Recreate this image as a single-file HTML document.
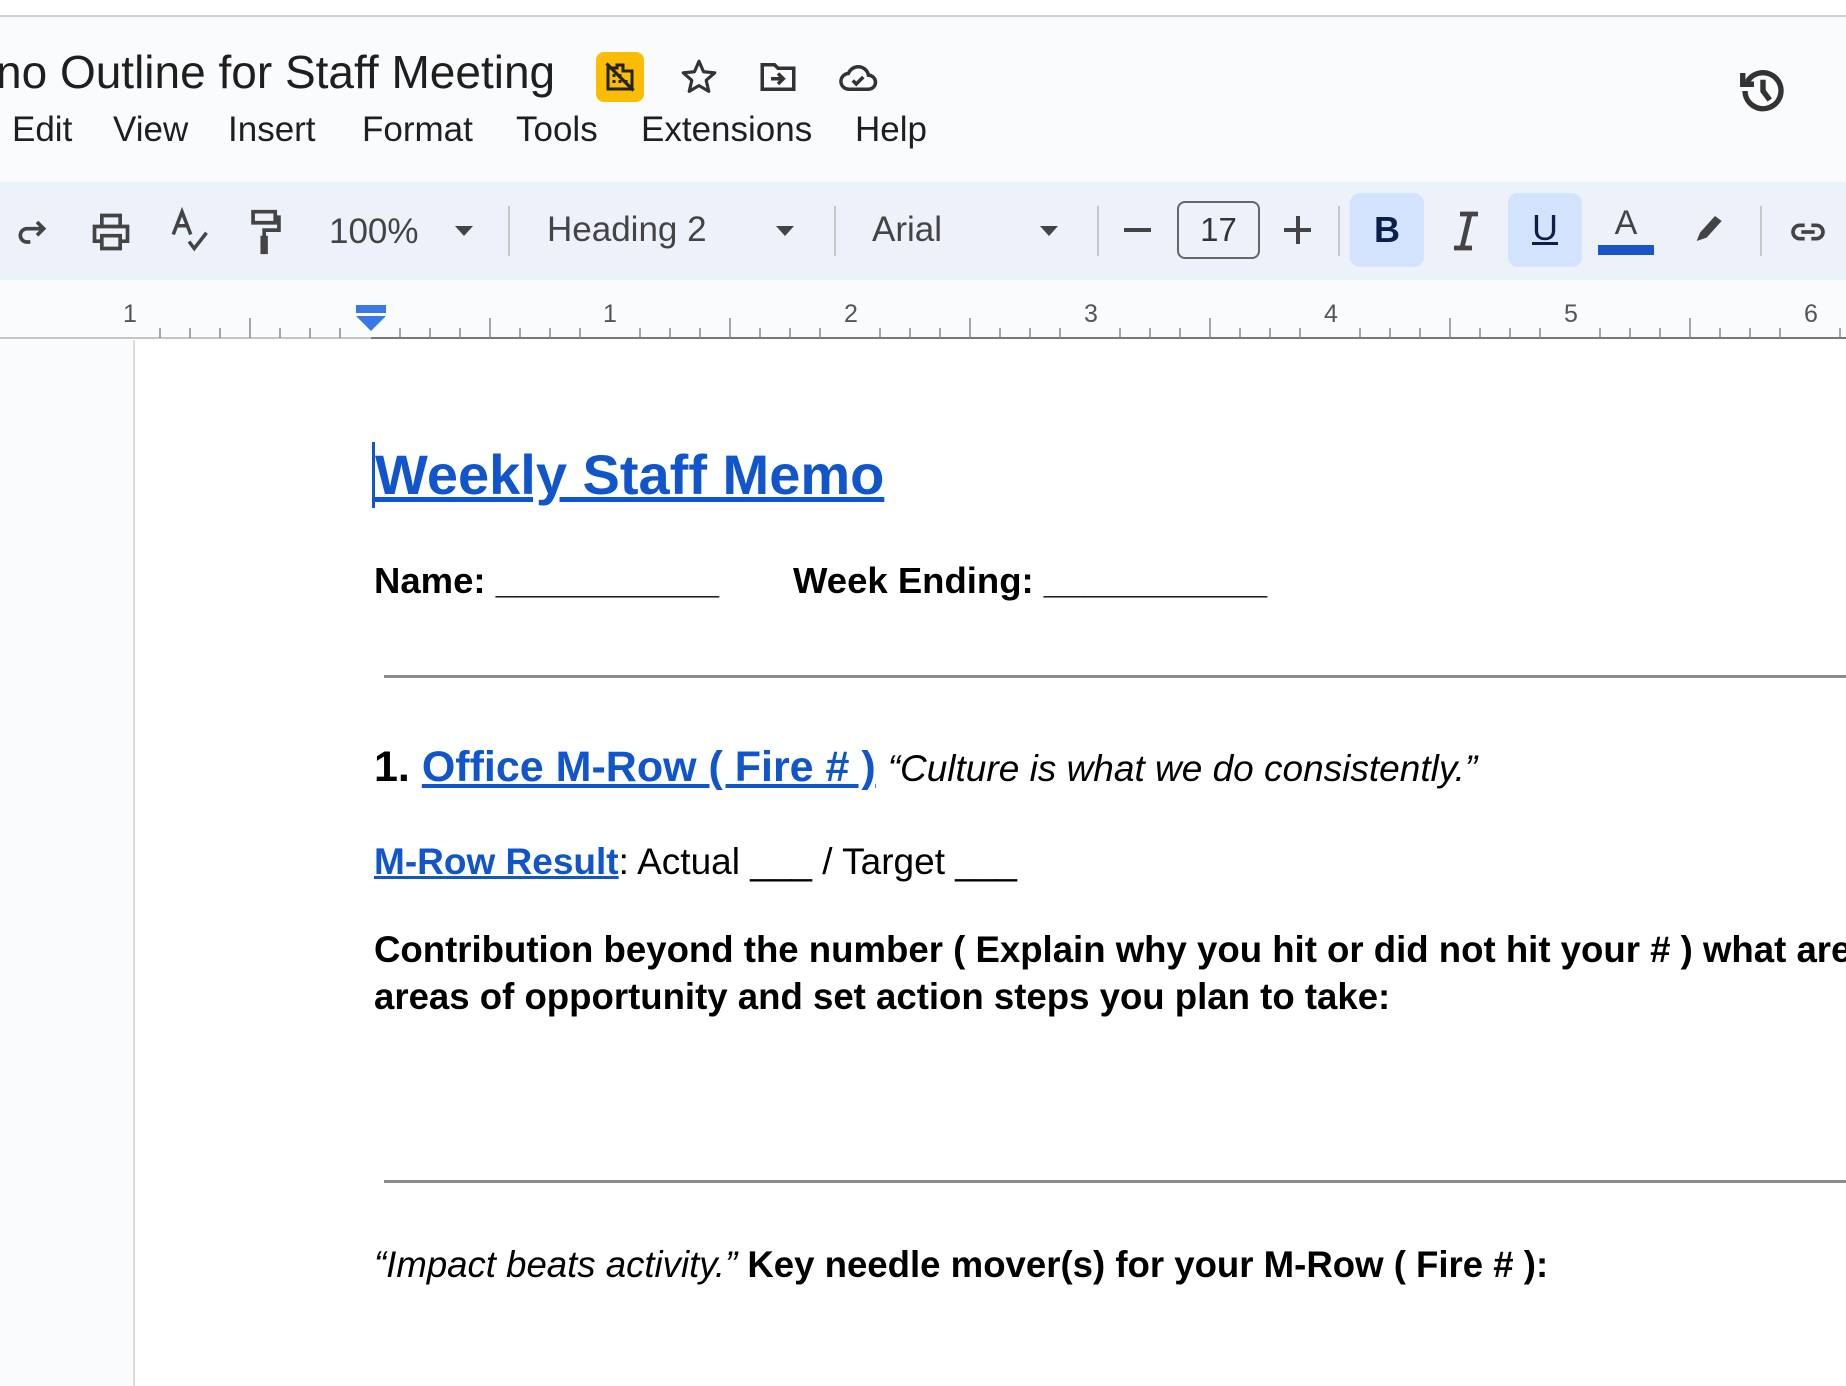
<!DOCTYPE html>
<html><head><meta charset="utf-8"><style>
*{margin:0;padding:0;box-sizing:border-box}
body{width:1846px;height:1386px;overflow:hidden;background:#f9fbfd;font-family:"Liberation Sans",Arial,sans-serif;position:relative;color:#1f1f1f}
.a{position:absolute;white-space:nowrap}
.top{position:absolute;left:0;top:0;width:1846px;height:17px;background:#fff;border-bottom:2px solid #d0d0d0}
.tb{position:absolute;left:0;top:182px;width:1846px;height:98px;background:#edf2fa}
.sep{position:absolute;top:206px;width:2px;height:50px;background:#c7c7c7}
.page{position:absolute;left:133px;top:340px;width:1713px;height:1046px;background:#fff;border-left:2px solid #dadce0}
.t{font-weight:bold;color:#000}
.blue{color:#1155cc;text-decoration:underline;font-weight:bold}
.hr{position:absolute;left:384px;width:1462px;height:3px;background:#8a8a8a}
.m{font-size:35px;top:110px}
</style></head><body>
<div class="top"></div>
<div class="a" style="left:-4px;top:45px;font-size:46px;color:#1f1f1f">no Outline for Staff Meeting</div>
<div class="a" style="left:596px;top:52px;width:48px;height:50px;background:#fbbc04;border-radius:8px"></div>
<svg class="a" style="left:602px;top:58px" width="36" height="38" viewBox="0 0 24 24"><path d="M4 20V6h6v-2h4v4h6v12z" fill="none" stroke="#222" stroke-width="2"/><path d="M7 11h2M7 15h2M11 11h2M11 15h2M15 15h2" stroke="#222" stroke-width="2"/><path d="M3 3l18 18" stroke="#222" stroke-width="2.2"/></svg>
<svg class="a" style="left:678px;top:56px" width="42" height="42" viewBox="0 0 24 24"><path d="M12 3l2.6 6 6.4.6-4.9 4.3 1.5 6.3L12 16.9 6.4 20.2l1.5-6.3L3 9.6l6.4-.6z" fill="none" stroke="#333" stroke-width="1.8" stroke-linejoin="round"/></svg>
<svg class="a" style="left:756px;top:56px" width="44" height="42" viewBox="0 0 24 24"><path d="M3 5h7l2 2h9v12H3z" fill="none" stroke="#333" stroke-width="2"/><path d="M8 13h7M12 10l3 3-3 3" fill="none" stroke="#333" stroke-width="2"/></svg>
<svg class="a" style="left:834px;top:56px" width="48" height="42" viewBox="0 0 24 24"><path d="M7 19h11a4 4 0 0 0 0-8 6 6 0 0 0-11.5-1A4.5 4.5 0 0 0 7 19z" fill="none" stroke="#333" stroke-width="2"/><path d="M9 14l2 2 4-4" fill="none" stroke="#333" stroke-width="2"/></svg>
<svg class="a" style="left:1736px;top:64px" width="54" height="54" viewBox="0 0 24 24"><path d="M5 8A8 8 0 1 1 4 12" fill="none" stroke="#333" stroke-width="2.4"/><path d="M3 4v5h5" fill="none" stroke="#333" stroke-width="2.4"/><path d="M12 7v5l3 4" fill="none" stroke="#333" stroke-width="2.4"/></svg>
<div class="a m" style="left:12px">Edit</div>
<div class="a m" style="left:113px">View</div>
<div class="a m" style="left:228px">Insert</div>
<div class="a m" style="left:362px">Format</div>
<div class="a m" style="left:516px">Tools</div>
<div class="a m" style="left:641px">Extensions</div>
<div class="a m" style="left:855px">Help</div>
<div class="tb"></div>
<svg class="a" style="left:12px;top:212px" width="40" height="40" viewBox="0 0 24 24"><path d="M18 10H9a4 4 0 0 0 0 8h2M15 6l4 4-4 4" fill="none" stroke="#444" stroke-width="2.2"/></svg>
<svg class="a" style="left:88px;top:210px" width="46" height="44" viewBox="0 0 24 24"><path d="M7 8V3h10v5M7 17H3V9h18v8h-4M7 14h10v7H7z" fill="none" stroke="#444" stroke-width="2"/></svg>
<svg class="a" style="left:168px;top:206px" width="42" height="50" viewBox="0 0 24 28"><path d="M3 16L8 3l5 13M5 11h6M12 20l3 4 7-9" fill="none" stroke="#444" stroke-width="2"/></svg>
<svg class="a" style="left:246px;top:208px" width="40" height="48" viewBox="0 0 20 26"><path d="M3 2h12v6H3zM15 5h2v7H9v4M8 16h2v8H8z" fill="none" stroke="#444" stroke-width="2"/></svg>
<div class="a" style="left:329px;top:212px;font-size:35px;color:#444">100%</div>
<div class="a" style="left:455px;top:226px;border:9px solid transparent;border-top:10px solid #444;border-bottom:0"></div>
<div class="sep" style="left:508px"></div>
<div class="a" style="left:547px;top:210px;font-size:35px;color:#444">Heading 2</div>
<div class="a" style="left:776px;top:226px;border:9px solid transparent;border-top:10px solid #444;border-bottom:0"></div>
<div class="sep" style="left:834px"></div>
<div class="a" style="left:872px;top:210px;font-size:35px;color:#444">Arial</div>
<div class="a" style="left:1040px;top:226px;border:9px solid transparent;border-top:10px solid #444;border-bottom:0"></div>
<div class="sep" style="left:1097px"></div>
<div class="a" style="left:1124px;top:228px;width:27px;height:4px;background:#444"></div>
<div class="a" style="left:1177px;top:201px;width:83px;height:58px;border:2px solid #666;border-radius:8px;font-size:33px;color:#333;text-align:center;line-height:54px">17</div>
<div class="a" style="left:1284px;top:228px;width:27px;height:4px;background:#444"></div>
<div class="a" style="left:1296px;top:216px;width:4px;height:28px;background:#444"></div>
<div class="sep" style="left:1338px"></div>
<div class="a" style="left:1350px;top:193px;width:74px;height:74px;background:#d3e3fd;border-radius:10px;font-size:36px;font-weight:bold;color:#0b1f4a;text-align:center;line-height:74px">B</div>
<svg class="a" style="left:1448px;top:210px" width="36" height="42" viewBox="0 0 18 21"><path d="M6 2h9M3 19h9M11 2L7 19" fill="none" stroke="#444" stroke-width="2.4"/></svg>
<div class="a" style="left:1508px;top:193px;width:74px;height:74px;background:#d3e3fd;border-radius:10px;font-size:36px;color:#0b1f4a;text-align:center;line-height:70px;text-decoration:underline">U</div>
<div class="a" style="left:1598px;top:204px;width:56px;text-align:center;font-size:34px;color:#444">A</div>
<div class="a" style="left:1598px;top:245px;width:56px;height:10px;background:#1a56c5"></div>
<svg class="a" style="left:1690px;top:206px" width="40" height="40" viewBox="0 0 24 24"><path d="M4 21l2-5 9-10 4 3-9 10z" fill="#444"/></svg>
<div class="sep" style="left:1760px"></div>
<svg class="a" style="left:1786px;top:212px" width="44" height="40" viewBox="0 0 24 24"><path d="M10 8H7a4 4 0 0 0 0 8h3M14 8h3a4 4 0 0 1 0 8h-3M8 12h8" fill="none" stroke="#444" stroke-width="2.2"/></svg>
<svg class="a" style="left:0;top:290px" width="1846" height="52">
<g fill="#555" font-family="Liberation Sans" font-size="25" text-anchor="middle">
<text x="130" y="32">1</text><text x="610" y="32">1</text><text x="851" y="32">2</text><text x="1091" y="32">3</text><text x="1331" y="32">4</text><text x="1571" y="32">5</text><text x="1811" y="32">6</text></g>
<line x1="0" y1="48" x2="371" y2="48" stroke="#c6c6c6" stroke-width="2"/>
<line x1="371" y1="48" x2="1846" y2="48" stroke="#777" stroke-width="2"/>
<g stroke="#888" stroke-width="1.5" id="tk"></g>
<rect x="356" y="15" width="30" height="8" fill="#3b78e7"/><path d="M356 26h30l-15 15z" fill="#3b78e7"/>
</svg>
<div class="page"></div>
<div class="a" style="left:372px;top:442px;width:3px;height:66px;background:#1155cc"></div>
<div class="a blue" style="left:375px;top:442px;font-size:56px">Weekly Staff Memo</div>
<div class="a t" style="left:374px;top:560px;font-size:36.5px">Name: ___________</div>
<div class="a t" style="left:793px;top:560px;font-size:36.5px">Week Ending: ___________</div>
<div class="hr" style="top:675px"></div>
<div class="a" style="left:374px;top:743px;font-size:43px"><span class="t">1. </span><span class="blue">Office M-Row ( Fire # )</span> <i style="font-size:37px;color:#000">“Culture is what we do consistently.”</i></div>
<div class="a" style="left:374px;top:841px;font-size:37px;color:#000"><span class="blue">M-Row Result</span>: Actual ___ / Target ___</div>
<div class="a t" style="left:374px;top:929px;font-size:36.6px">Contribution beyond the number ( Explain why you hit or did not hit your # ) what are</div>
<div class="a t" style="left:374px;top:976px;font-size:36.6px">areas of opportunity and set action steps you plan to take:</div>
<div class="hr" style="top:1180px"></div>
<div class="a" style="left:374px;top:1244px;font-size:36.6px;color:#000"><i>“Impact beats activity.”</i> <b>Key needle mover(s) for your M-Row ( Fire # ):</b></div>
<script>
var g=document.getElementById('tk'),s='';
for(var x=130;x<1846;x+=30){var k=Math.round((x-130)/30)%8;var h=k==0?0:(k==4?20:10);if(h)s+='<line x1="'+x+'" y1="'+(48-h)+'" x2="'+x+'" y2="48"/>';}
g.innerHTML=s;
</script>
</body></html>
